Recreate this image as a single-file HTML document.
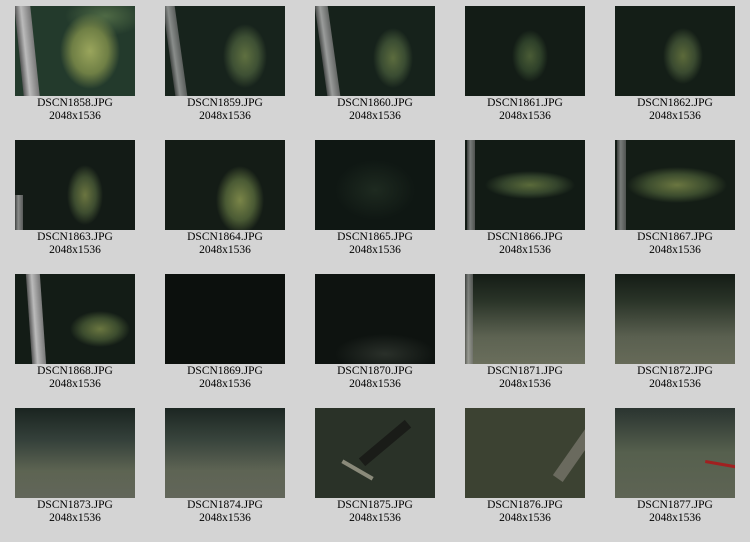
<!DOCTYPE html><html><head><style>
body{margin:0;background:#d4d4d4;width:750px;height:542px;position:relative;overflow:hidden;font-family:"Liberation Serif",serif;font-size:11.5px;color:#000}
.t{position:absolute;width:150px;text-align:center;line-height:13px}
.i{position:absolute;width:120px;height:90px;overflow:hidden}
.p{position:absolute;top:0;height:90px;background:linear-gradient(90deg,#555,#bbb 40%,#777)}
</style></head><body>
<!-- row 1 -->
<div class="i" style="left:15px;top:6px;background:radial-gradient(ellipse 30px 38px at 75px 45px,#9aa55c,#6f7f45 60%,transparent 100%),radial-gradient(ellipse 40px 20px at 90px 10px,#4f6a45,transparent),#233a2c"><div class="p" style="left:4px;width:16px;transform:skewX(6deg)"></div></div>
<div class="i" style="left:165px;top:6px;background:radial-gradient(ellipse 22px 32px at 80px 50px,#5f7040,#3e5034 60%,transparent),#17231c"><div class="p" style="left:4px;width:12px;transform:skewX(8deg);opacity:.7"></div></div>
<div class="i" style="left:315px;top:6px;background:radial-gradient(ellipse 20px 30px at 78px 52px,#5c6c3e,#3a4c32 60%,transparent),#16221b"><div class="p" style="left:6px;width:13px;transform:skewX(8deg);opacity:.8"></div></div>
<div class="i" style="left:465px;top:6px;background:radial-gradient(ellipse 18px 26px at 65px 50px,#4a5c36,#2e4029 60%,transparent),#131c16"></div>
<div class="i" style="left:615px;top:6px;background:radial-gradient(ellipse 20px 28px at 68px 50px,#5c6a3a,#3a4a30 60%,transparent),#141e17"></div>
<!-- row 2 -->
<div class="i" style="left:15px;top:140px;background:radial-gradient(ellipse 18px 30px at 70px 55px,#6b7540,#3e4d30 60%,transparent),#131b16"><div class="p" style="left:0;width:8px;top:55px;height:35px;opacity:.7"></div></div>
<div class="i" style="left:165px;top:140px;background:radial-gradient(ellipse 24px 34px at 75px 60px,#7a8548,#4a5a34 60%,transparent),#141c16"></div>
<div class="i" style="left:315px;top:140px;background:radial-gradient(ellipse 40px 30px at 60px 50px,#1e2a20,transparent),#0f1713"></div>
<div class="i" style="left:465px;top:140px;background:radial-gradient(ellipse 45px 14px at 65px 45px,#5a6a3a,#34442c 60%,transparent),#121b15"><div class="p" style="left:2px;width:8px;opacity:.6"></div></div>
<div class="i" style="left:615px;top:140px;background:radial-gradient(ellipse 50px 18px at 62px 45px,#6a7640,#3c4c2e 60%,transparent),#141d16"><div class="p" style="left:2px;width:9px;opacity:.6"></div></div>
<!-- row 3 -->
<div class="i" style="left:15px;top:274px;background:radial-gradient(ellipse 30px 18px at 85px 55px,#6a7640,#3c4c2e 60%,transparent),#131c16"><div class="p" style="left:14px;width:14px;transform:skewX(4deg)"></div></div>
<div class="i" style="left:165px;top:274px;background:#0c100d"></div>
<div class="i" style="left:315px;top:274px;background:radial-gradient(ellipse 50px 20px at 70px 80px,#2a302a,transparent),#0e1310"></div>
<div class="i" style="left:465px;top:274px;background:linear-gradient(180deg,#141c16 0%,#2a3428 30%,#5d6352 70%,#6a6e5c)"><div class="p" style="left:0;width:8px;opacity:.6"></div></div>
<div class="i" style="left:615px;top:274px;background:linear-gradient(180deg,#141c16 0%,#2a3428 30%,#5a6050 70%,#666a58)"></div>
<!-- row 4 -->
<div class="i" style="left:15px;top:408px;background:linear-gradient(180deg,#1a2420 0%,#34403a 35%,#5d6452 70%,#62665a)"></div>
<div class="i" style="left:165px;top:408px;background:linear-gradient(180deg,#1c2622 0%,#38443c 35%,#5e6454 70%,#62665a)"></div>
<div class="i" style="left:315px;top:408px;background:#2a3228"><div style="position:absolute;left:40px;top:30px;width:60px;height:10px;background:#1a1c18;transform:rotate(-40deg)"></div><div style="position:absolute;left:25px;top:60px;width:35px;height:4px;background:#8a8a7a;transform:rotate(30deg)"></div></div>
<div class="i" style="left:465px;top:408px;background:#3c4232"><div style="position:absolute;left:80px;top:40px;width:60px;height:12px;background:#6a6a5e;transform:rotate(-55deg)"></div></div>
<div class="i" style="left:615px;top:408px;background:linear-gradient(180deg,#2a3430,#56604e 50%,#5e6454)"><div style="position:absolute;left:90px;top:55px;width:35px;height:3px;background:#a02020;transform:rotate(10deg)"></div></div>
<!-- labels -->
<div class="t" style="left:0;top:97px">DSCN1858.JPG<br>2048x1536</div>
<div class="t" style="left:150px;top:97px">DSCN1859.JPG<br>2048x1536</div>
<div class="t" style="left:300px;top:97px">DSCN1860.JPG<br>2048x1536</div>
<div class="t" style="left:450px;top:97px">DSCN1861.JPG<br>2048x1536</div>
<div class="t" style="left:600px;top:97px">DSCN1862.JPG<br>2048x1536</div>
<div class="t" style="left:0;top:231px">DSCN1863.JPG<br>2048x1536</div>
<div class="t" style="left:150px;top:231px">DSCN1864.JPG<br>2048x1536</div>
<div class="t" style="left:300px;top:231px">DSCN1865.JPG<br>2048x1536</div>
<div class="t" style="left:450px;top:231px">DSCN1866.JPG<br>2048x1536</div>
<div class="t" style="left:600px;top:231px">DSCN1867.JPG<br>2048x1536</div>
<div class="t" style="left:0;top:365px">DSCN1868.JPG<br>2048x1536</div>
<div class="t" style="left:150px;top:365px">DSCN1869.JPG<br>2048x1536</div>
<div class="t" style="left:300px;top:365px">DSCN1870.JPG<br>2048x1536</div>
<div class="t" style="left:450px;top:365px">DSCN1871.JPG<br>2048x1536</div>
<div class="t" style="left:600px;top:365px">DSCN1872.JPG<br>2048x1536</div>
<div class="t" style="left:0;top:499px">DSCN1873.JPG<br>2048x1536</div>
<div class="t" style="left:150px;top:499px">DSCN1874.JPG<br>2048x1536</div>
<div class="t" style="left:300px;top:499px">DSCN1875.JPG<br>2048x1536</div>
<div class="t" style="left:450px;top:499px">DSCN1876.JPG<br>2048x1536</div>
<div class="t" style="left:600px;top:499px">DSCN1877.JPG<br>2048x1536</div>
</body></html>
